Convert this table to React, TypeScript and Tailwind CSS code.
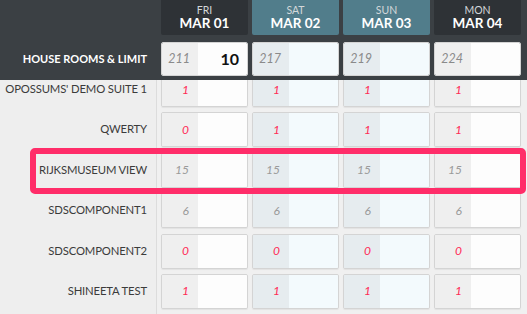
import React from 'react';

type Day = { dow: string; date: string; weekend: boolean; house: number; limit?: number };

const days: Day[] = [
  { dow: 'FRI', date: 'MAR 01', weekend: false, house: 211, limit: 10 },
  { dow: 'SAT', date: 'MAR 02', weekend: true, house: 217 },
  { dow: 'SUN', date: 'MAR 03', weekend: true, house: 219 },
  { dow: 'MON', date: 'MAR 04', weekend: false, house: 224 },
];

// value per room, same for each of the four days
const rooms: { name: string; value: number }[] = [
  { name: "OPOSSUMS' DEMO SUITE 1", value: 1 },
  { name: 'QWERTY', value: 0 },
  { name: 'RIJKSMUSEUM VIEW', value: 15 },
  { name: 'SDSCOMPONENT1', value: 6 },
  { name: 'SDSCOMPONENT2', value: 0 },
  { name: 'SHINEETA TEST', value: 1 },
];

// qwerty is 0 on fri only
const valueFor = (room: number, day: number) => {
  if (room === 1 && day > 0) return 1;
  return rooms[room].value;
};

const Cell: React.FC<{ weekend: boolean; value: number; muted?: boolean; children?: React.ReactNode }> = ({ weekend, value, muted, children }) => (
  <div className="flex h-[35px] w-[87px] overflow-hidden rounded-[2px] border border-[#d4d4d4] shadow-[0_1px_1px_rgba(0,0,0,0.06)]">
    <div
      className={`flex w-[36px] items-center justify-end pr-[9px] text-[12px] italic ${weekend ? 'bg-[#e6ecef]' : 'bg-[#efefef]'} ${muted ? 'text-[#9a9a9a]' : 'text-[#ff2b55]'}`}
    >
      {value}
    </div>
    <div className={`flex flex-1 items-center justify-end pr-[8px] ${weekend ? 'bg-[#f3fafd]' : 'bg-[#fdfdfd]'}`}>{children}</div>
  </div>
);

export default function App() {
  return (
    <div className="relative h-[314px] w-[527px] overflow-hidden bg-[#f0f0f0] font-['Lato',sans-serif]">
      {/* header */}
      <div className="flex h-[80px] bg-[#3b4044]">
        <div className="flex w-[161px] flex-col">
          <div className="h-[42px]" />
          <div className="flex h-[34px] items-center justify-end whitespace-nowrap pr-[14px] text-[11px] font-bold text-white">
            HOUSE ROOMS &amp; LIMIT
          </div>
        </div>
        <div className="flex gap-[4px]">
          {days.map((d) => (
            <div key={d.dow} className="flex w-[87px] flex-col">
              <div
                className={`flex h-[35px] flex-col items-center justify-center rounded-b-[2px] ${d.weekend ? 'bg-[#517d8b]' : 'bg-[#2e3236]'}`}
              >
                <span className="text-[10.5px] leading-[12px] text-[#d4d8da]">{d.dow}</span>
                <span className="text-[13.5px] font-bold leading-[15px] text-white">{d.date}</span>
              </div>
              <div className="mt-[7px] flex h-[34px] overflow-hidden rounded-[2px] border border-[#d4d4d4]">
                <div
                  className={`flex w-[36px] items-center justify-end pr-[8px] text-[12.5px] italic text-[#8a8a8a] ${d.weekend ? 'bg-[#e6ecef]' : 'bg-[#efefef]'}`}
                >
                  {d.house}
                </div>
                <div
                  className={`flex flex-1 items-center justify-end pr-[8px] text-[16px] font-bold text-[#111] ${d.weekend ? 'bg-[#f3fafd]' : 'bg-[#fdfdfd]'}`}
                >
                  {d.limit}
                </div>
              </div>
            </div>
          ))}
        </div>
      </div>

      {/* body */}
      <div className="flex h-[234px] overflow-hidden">
        <div className="w-[157px] shrink-0 border-r border-[#dcdcdc] bg-[#eeeeee]">
          <div className="-mt-[8px] flex flex-col gap-[5.4px]">
            {rooms.map((r) => (
              <div key={r.name} className="flex h-[35px] items-center justify-end whitespace-nowrap pr-[9px] text-[11.3px] tracking-[-0.15px] text-[#3b3b3b]">
                {r.name}
              </div>
            ))}
          </div>
        </div>
        <div className="-mt-[8px] ml-[4px] flex flex-col gap-[5.4px]">
          {rooms.map((r, ri) => (
            <div key={r.name} className="flex gap-[4px]">
              {days.map((d, di) => {
                const v = valueFor(ri, di);
                return <Cell key={d.dow} weekend={d.weekend} value={v} muted={v > 1} />;
              })}
            </div>
          ))}
        </div>
      </div>

      {/* highlight annotation */}
      <div className="absolute left-[30px] top-[148px] h-[46px] w-[496px] rounded-[5px] border-[6px] border-[#ff2d69]" />
    </div>
  );
}
